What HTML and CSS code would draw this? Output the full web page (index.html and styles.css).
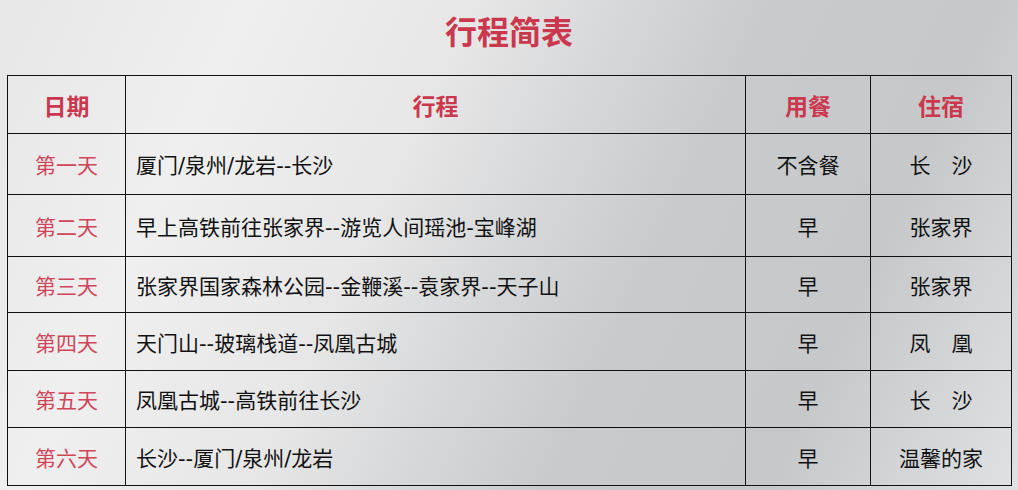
FILE: index.html
```html
<!DOCTYPE html>
<html lang="zh">
<head>
<meta charset="utf-8">
<title>行程简表</title>
<link rel="stylesheet" href="styles.css">
</head>
<body>
<div class="page">
  <h1 class="title">行程简表</h1>
  <table class="plan">
    <colgroup>
      <col class="c-day"><col class="c-route"><col class="c-meal"><col class="c-stay">
    </colgroup>
    <thead>
      <tr class="r-head"><th>日期</th><th>行程</th><th>用餐</th><th>住宿</th></tr>
    </thead>
    <tbody>
      <tr class="r1"><td class="day">第一天</td><td class="route">厦门/泉州/龙岩--长沙</td><td class="mid">不含餐</td><td class="mid">长　沙</td></tr>
      <tr class="r2"><td class="day">第二天</td><td class="route">早上高铁前往张家界--游览人间瑶池-宝峰湖</td><td class="mid">早</td><td class="mid">张家界</td></tr>
      <tr class="r3"><td class="day">第三天</td><td class="route">张家界国家森林公园--金鞭溪--袁家界--天子山</td><td class="mid">早</td><td class="mid">张家界</td></tr>
      <tr class="r4"><td class="day">第四天</td><td class="route">天门山--玻璃栈道--凤凰古城</td><td class="mid">早</td><td class="mid">凤　凰</td></tr>
      <tr class="r5"><td class="day">第五天</td><td class="route">凤凰古城--高铁前往长沙</td><td class="mid">早</td><td class="mid">长　沙</td></tr>
      <tr class="r6"><td class="day">第六天</td><td class="route">长沙--厦门/泉州/龙岩</td><td class="mid">早</td><td class="mid">温馨的家</td></tr>
    </tbody>
  </table>
</div>
</body>
</html>
```
FILE: styles.css
```css
html, body {
  margin: 0;
  padding: 0;
  width: 1018px;
  height: 490px;
  overflow: hidden;
}
body {
  font-family: "Noto Sans CJK SC", "Noto Sans", sans-serif;
  background: linear-gradient(115deg, #e7e7e8 0%, #efefef 20%, #e7e7e8 38%, #d7d8d9 50%, #c9cacc 62%, #c7c8ca 80%, #e0e1e2 100%);
}
.page {
  display: flex;
  flex-direction: column;
  padding-left: 7px;
}
.title {
  margin: 0;
  height: 75px;
  line-height: 60px;
  text-align: center;
  font-size: 32px;
  font-weight: 700;
  color: #cb374d;
  padding-right: 7px;
}
.plan {
  border-collapse: collapse;
  width: 1004px;
  table-layout: fixed;
}
.c-day { width: 118px; }
.c-route { width: 620px; }
.c-meal { width: 125px; }
.c-stay { width: 141px; }
.plan th, .plan td {
  border: 1px solid #111;
  padding: 0;
  vertical-align: middle;
}
.plan th {
  font-size: 23px;
  font-weight: 700;
  color: #cb374d;
  text-align: center;
}
.plan td {
  font-size: 21px;
  color: #111;
}
.plan td.day {
  color: #d14558;
  text-align: center;
}
.plan td.route {
  padding-left: 10px;
  font-family: "DejaVu Sans", "Noto Sans CJK SC", sans-serif;
}
.plan td.mid {
  text-align: center;
}
.r-head { height: 58px; }
.r1 { height: 61px; }
.r2 { height: 62px; }
.r3 { height: 56px; }
.r4 { height: 58px; }
.r5 { height: 57px; }
.r6 { height: 58px; }
```
